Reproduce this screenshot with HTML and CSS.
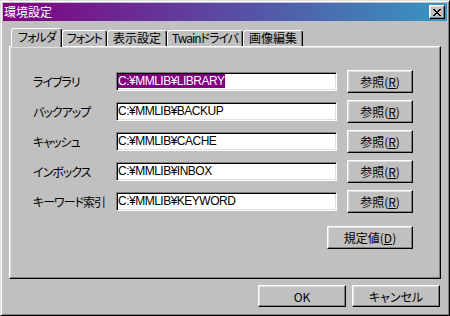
FILE: index.html
```html
<!DOCTYPE html>
<html lang="ja">
<head>
<meta charset="utf-8">
<title>環境設定</title>
<link rel="stylesheet" href="styles.css">
</head>
<body>
<div class="window">
  <div class="titlebar">
    <span class="title">環境設定</span>
    <button class="close" aria-label="閉じる">
      <svg width="8" height="7" viewBox="0 0 8 7" shape-rendering="crispEdges">
        <path d="M0 0h2v1h-2zM6 0h2v1h-2zM1 1h2v1h-2zM5 1h2v1h-2zM2 2h4v1h-4zM3 3h2v1h-2zM2 4h4v1h-4zM1 5h2v1h-2zM5 5h2v1h-2zM0 6h2v1h-2zM6 6h2v1h-2z" fill="#000"/>
      </svg>
    </button>
  </div>
  <div class="body">
    <div class="tabs">
      <div class="tab tab-kana tab-active">フォルダ</div>
      <div class="tab tab-kana">フォント</div>
      <div class="tab">表示設定</div>
      <div class="tab tab-kana">Twainドライバ</div>
      <div class="tab">画像編集</div>
    </div>
    <div class="panel">
      <div class="grid">
        <span class="label">ライブラリ</span>
        <div class="field"><span class="sel">C:¥MMLIB¥LIBRARY</span></div>
        <button class="btn">参照(<u>R</u>)</button>

        <span class="label">バックアップ</span>
        <div class="field">C:¥MMLIB¥BACKUP</div>
        <button class="btn">参照(<u>R</u>)</button>

        <span class="label">キャッシュ</span>
        <div class="field">C:¥MMLIB¥CACHE</div>
        <button class="btn">参照(<u>R</u>)</button>

        <span class="label">インボックス</span>
        <div class="field">C:¥MMLIB¥INBOX</div>
        <button class="btn">参照(<u>R</u>)</button>

        <span class="label">キーワード索引</span>
        <div class="field">C:¥MMLIB¥KEYWORD</div>
        <button class="btn">参照(<u>R</u>)</button>

        <button class="btn btn-default">規定値(<u>D</u>)</button>
      </div>
    </div>
    <div class="actions">
      <button class="btn btn-action">OK</button>
      <button class="btn btn-action">キャンセル</button>
    </div>
  </div>
</div>
</body>
</html>
```

FILE: styles.css
```css
* { box-sizing: border-box; }

html, body {
  margin: 0;
  padding: 0;
  background: #c0c0c0;
}

body {
  font-family: "Noto Sans CJK JP", "Liberation Sans", sans-serif;
  font-size: 12px;
  font-weight: 400;
  color: #000;
  font-feature-settings: "palt";
}

.window {
  width: 450px;
  height: 316px;
  background: #c0c0c0;
  border: 1px solid;
  border-color: #dfdfdf #000 #000 #dfdfdf;
  box-shadow: inset 1px 1px #fff, inset -1px -1px #808080;
  padding: 2px;
  display: flex;
  flex-direction: column;
}

.titlebar {
  height: 18px;
  flex: none;
  display: flex;
  align-items: center;
  justify-content: space-between;
  padding: 0 2px 0 1px;
  background: linear-gradient(to right, #820082 0%, #5a4aa2 50%, #3796c2 100%);
  color: #fff;
}

.title {
  font-size: 12px;
  line-height: 14px;
}

.close {
  width: 16px;
  height: 14px;
  padding: 0;
  margin: 0;
  display: flex;
  align-items: center;
  justify-content: center;
  background: #c0c0c0;
  border: 1px solid;
  border-color: #fff #000 #000 #fff;
  box-shadow: inset -1px -1px #808080, inset 1px 1px #dfdfdf;
}

.body {
  flex: 1;
  display: flex;
  flex-direction: column;
  padding: 7px 6px 6px 6px;
}

.tabs {
  display: flex;
  align-items: flex-end;
  height: 18px;
  padding-left: 2px;
  flex: none;
}

.tab {
  height: 16px;
  padding: 0 5px;
  line-height: 14px;
  white-space: nowrap;
  background: #c0c0c0;
  border-top: 1px solid #fff;
  border-left: 1px solid #fff;
  border-right: 1px solid #000;
  border-radius: 3px 3px 0 0;
  box-shadow: inset -1px 0 #808080;
}

.tab-kana {
  letter-spacing: -1px;
  padding: 0 4px;
}

.tab-active {
  height: 19px;
  margin-bottom: -1px;
  padding: 1px 5px 0 6px;
  position: relative;
  z-index: 1;
}

.panel {
  flex: 1;
  background: #c0c0c0;
  border: 1px solid;
  border-color: #fff #000 #000 #fff;
  box-shadow: inset -1px -1px #808080, inset 1px 1px #dfdfdf;
  padding: 23px 0 0 23px;
}

.grid {
  display: grid;
  grid-template-columns: 73px 221px 66px;
  grid-auto-rows: 23px;
  column-gap: 10px;
  row-gap: 7px;
  align-items: center;
}

.label {
  white-space: nowrap;
  line-height: 14px;
  letter-spacing: -1px;
}

.field {
  height: 19px;
  background: #fff;
  border: 1px solid;
  border-color: #808080 #fff #fff #808080;
  box-shadow: inset 1px 1px #000, inset -1px -1px #dfdfdf;
  padding: 1px 0 0 1px;
  font-family: "Liberation Sans", "Noto Sans CJK JP", sans-serif;
  font-size: 12px;
  letter-spacing: -0.5px;
  line-height: 15px;
  white-space: nowrap;
  overflow: hidden;
}

.sel {
  display: inline-block;
  background: #800080;
  color: #fff;
  line-height: 14px;
}

.btn {
  height: 23px;
  padding: 0;
  margin: 0;
  font-family: inherit;
  font-size: 12px;
  font-weight: 400;
  font-feature-settings: "palt";
  color: #000;
  background: #c0c0c0;
  border: 1px solid;
  border-color: #fff #000 #000 #fff;
  box-shadow: inset -1px -1px #808080, inset 1px 1px #dfdfdf;
  white-space: nowrap;
}

.btn u {
  text-decoration: underline;
  text-underline-offset: 1px;
}

.btn-default {
  grid-column: 2 / 4;
  justify-self: end;
  width: 86px;
  margin-top: 12px;
}

.actions {
  flex: none;
  display: flex;
  justify-content: flex-end;
  gap: 6px;
  margin-top: 6px;
  padding-right: 1px;
}

.btn-action {
  width: 88px;
  height: 22px;
}
```
